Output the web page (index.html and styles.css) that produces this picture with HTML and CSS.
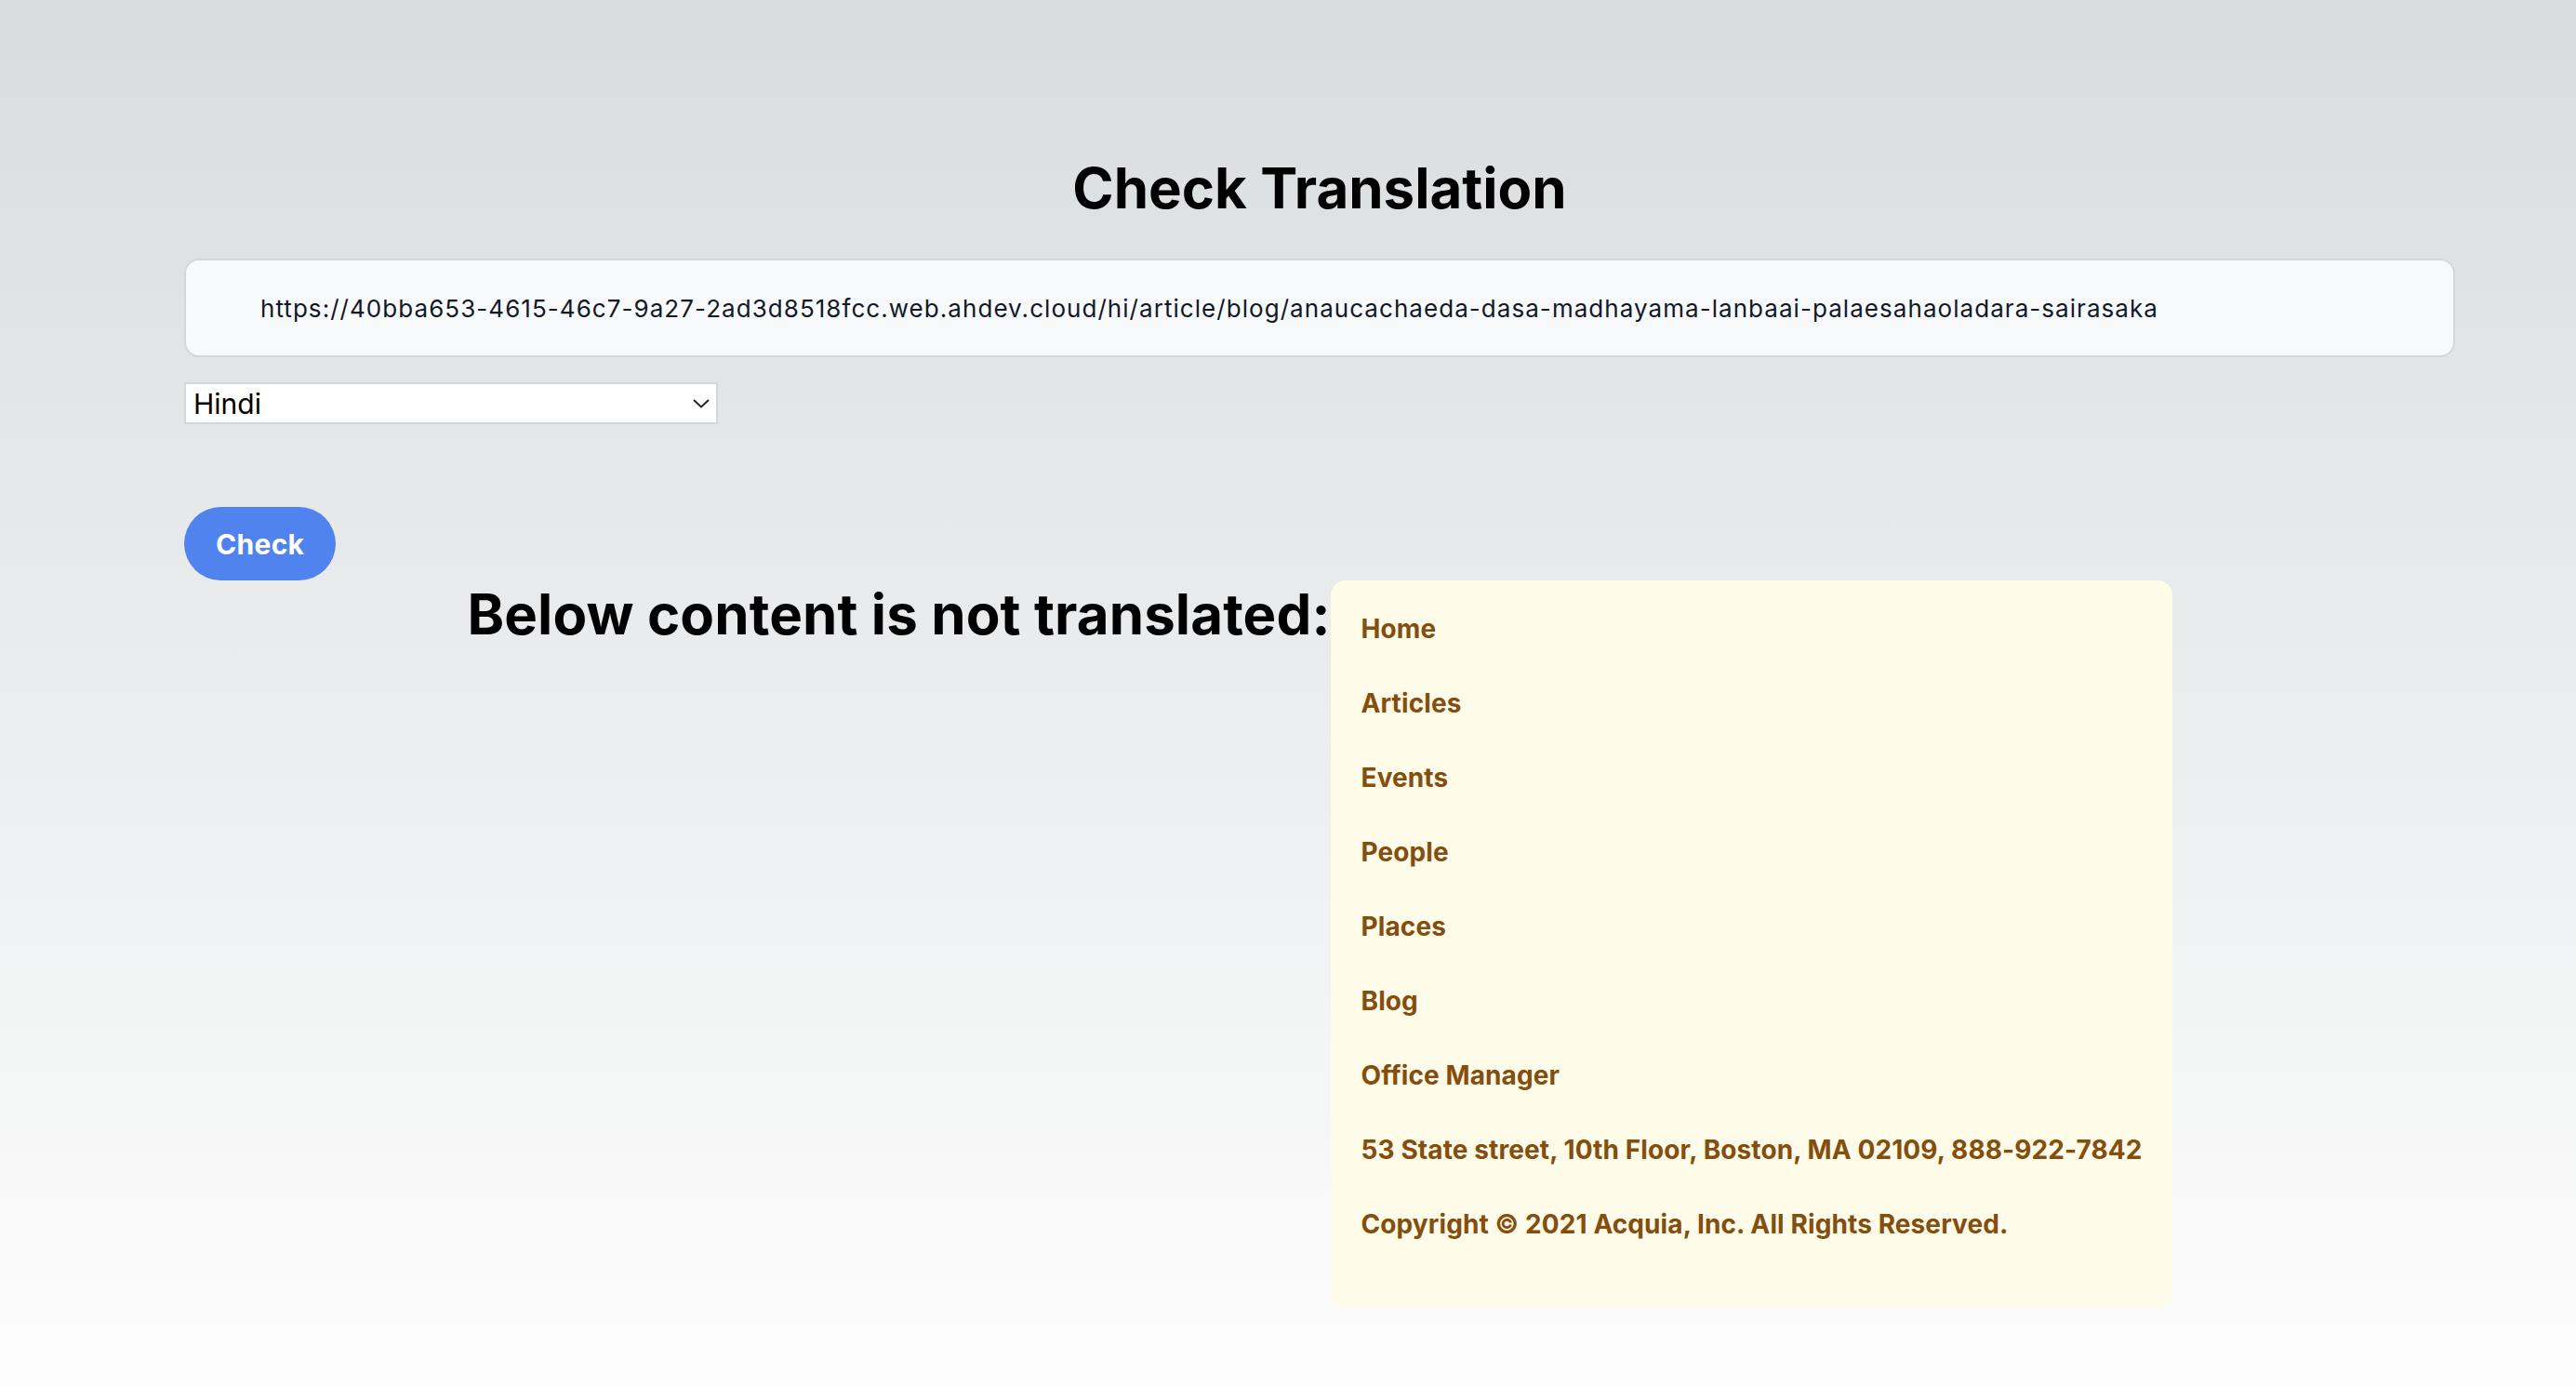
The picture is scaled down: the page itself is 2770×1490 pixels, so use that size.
FILE: index.html
```html
<!DOCTYPE html>
<html lang="en">
<head>
<meta charset="utf-8">
<title>Check Translation</title>
<link rel="stylesheet" href="styles.css">
</head>
<body>
<main class="page">
  <h1 class="title">Check Translation</h1>
  <input class="url-input" type="text" value="https://40bba653-4615-46c7-9a27-2ad3d8518fcc.web.ahdev.cloud/hi/article/blog/anaucachaeda-dasa-madhayama-lanbaai-palaesahaoladara-sairasaka">
  <div class="select-row">
    <div class="select">
      <span class="select-value">Hindi</span>
      <svg class="chevron" width="18" height="10" viewBox="0 0 18 10"><path d="M1 1 L9 8.5 L17 1" fill="none" stroke="#222" stroke-width="2"/></svg>
    </div>
  </div>
  <button class="check-btn">Check</button>
  <section class="result">
    <h2 class="result-title">Below content is not translated:</h2>
    <ul class="untranslated">
      <li>Home</li>
      <li>Articles</li>
      <li>Events</li>
      <li>People</li>
      <li>Places</li>
      <li>Blog</li>
      <li>Office Manager</li>
      <li>53 State street, 10th Floor, Boston, MA 02109, 888-922-7842</li>
      <li>Copyright © 2021 Acquia, Inc. All Rights Reserved.</li>
    </ul>
  </section>
</main>
</body>
</html>
```

FILE: styles.css
```css
html, body {
  margin: 0;
  padding: 0;
}
body {
  min-height: 100vh;
  background: linear-gradient(to bottom, #d9dcde 0%, #fdfdfd 100%);
  font-family: Inter, "Noto Sans", "Liberation Sans", sans-serif;
  color: #000;
}
.page {
  padding: 0 130px 0 198px;
  display: flex;
  flex-direction: column;
}
.title {
  margin: 166px 0 0;
  font-size: 60px;
  font-weight: 700;
  text-align: center;
  line-height: normal;
}
.url-input {
  box-sizing: border-box;
  margin-top: 40px;
  width: 100%;
  height: 106px;
  border: 2px solid #d3d6db;
  border-radius: 16px;
  background: #f8f9fb;
  padding: 0 0 0 80px;
  font-family: Inter, "Noto Sans", sans-serif;
  font-size: 26px;
  letter-spacing: 1.05px;
  color: #111827;
  outline: none;
}
.select-row {
  margin-top: 27px;
  display: flex;
}
.select {
  box-sizing: border-box;
  width: 574px;
  height: 45px;
  background: #fff;
  border: 2px solid #d3d6db;
  display: flex;
  align-items: center;
  justify-content: space-between;
  padding: 0 7px 0 8px;
}
.select-value {
  font-size: 30px;
  color: #000;
}
.check-btn {
  align-self: flex-start;
  margin-top: 89px;
  height: 79px;
  padding: 0 34px;
  border: none;
  border-radius: 40px;
  background: #5083ee;
  color: #fff;
  font-family: Inter, "Noto Sans", sans-serif;
  font-size: 30px;
  font-weight: 700;
  letter-spacing: 0.3px;
}
.result {
  display: flex;
  justify-content: center;
  align-items: flex-start;
}
.result-title {
  margin: 0;
  font-size: 60px;
  font-weight: 700;
  line-height: normal;
  letter-spacing: 0.1px;
}
.untranslated {
  list-style: none;
  margin: 0;
  padding: 35px 32px 74px 33px;
  background: #fefce8;
  border-radius: 16px;
  display: flex;
  flex-direction: column;
  gap: 46px;
}
.untranslated li {
  font-size: 28px;
  font-weight: 700;
  color: #854d0e;
  line-height: normal;
  letter-spacing: 0.1px;
  white-space: nowrap;
}
```
